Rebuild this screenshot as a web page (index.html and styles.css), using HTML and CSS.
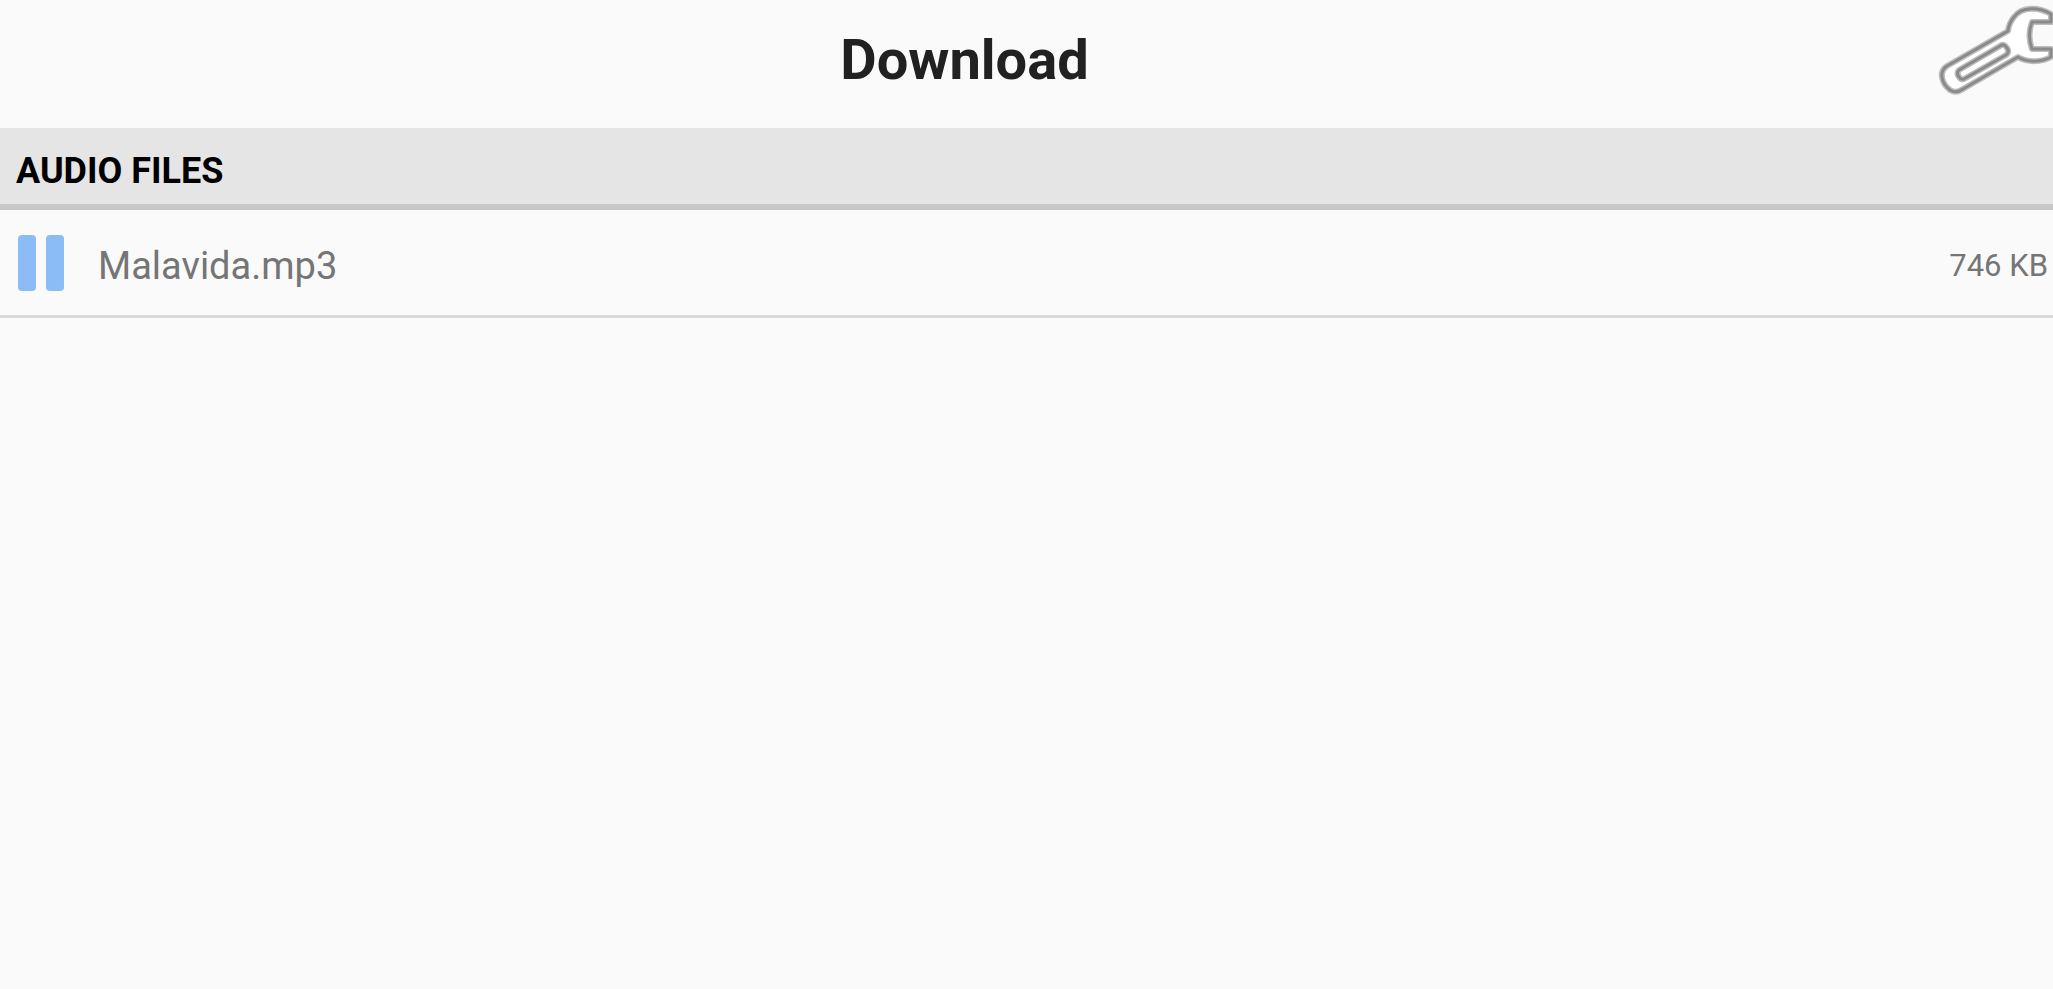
FILE: index.html
```html
<!DOCTYPE html>
<html lang="en">
  <head>
    <meta charset="UTF-8" />
    <meta name="viewport" content="width=device-width, initial-scale=1.0" />
    <title>Download</title>
    <link rel="stylesheet" href="styles.css">
  </head>
  <body>
    <header class="top-bar">
      <h1 class="title">Download</h1>
      <button class="settings" type="button" aria-label="Settings">
        <svg class="wrench" viewBox="6 0 124 128" aria-hidden="true">
          <g id="wrench-outline">
            <path d="M128 14 C116 7 99 6 91 17 Q86 23 85 31 L24 66 C15 72 19 84 27 90 Q33 94 40 89 L95 57 C105 63 119 62 128 57 V49 H109 Q104 35 109 22 H128 Z" />
            <path d="M36 70 L77 46 Q81 43 84 48 Q87 52 83 55 L41 79 Q38 80 36 77 Q33 73 36 70 Z" />
          </g>
          <use class="wrench-core" href="#wrench-outline" />
        </svg>
      </button>
    </header>
    <main>
      <h2 class="section-title">AUDIO FILES</h2>
      <ul class="file-list">
        <li class="file">
          <button class="pause" type="button" aria-label="Pause">
            <span class="pause-bar"></span>
            <span class="pause-bar"></span>
          </button>
          <span class="file-name">Malavida.mp3</span>
          <span class="file-size">746 KB</span>
        </li>
      </ul>
    </main>
  </body>
</html>
```
FILE: styles.css
```css
* {
  box-sizing: border-box;
}

body {
  margin: 0;
  background: #fafafa;
  color: #757575;
  font-family: Roboto, sans-serif;
}

button {
  padding: 0;
  border: 0;
  background: none;
  cursor: pointer;
}

.top-bar {
  display: flex;
  height: 128px;
}

.title {
  flex: 1;
  margin: 0;
  color: #212121;
  font-size: 56px;
  font-weight: 700;
  line-height: 120px;
  text-align: center;
}

.settings {
  width: 124px;
}

.wrench {
  display: block;
  width: 124px;
  height: 128px;
  fill: #fff;
  stroke: #bdbdbd;
  stroke-width: 6px;
  stroke-linejoin: round;
}

.wrench-core {
  fill: none;
  stroke: #8a8a8a;
  stroke-width: 3px;
}

.section-title {
  margin: 0;
  padding: 10px 16px 0;
  border-bottom: 6px solid #c8c8c8;
  background: #e5e5e5;
  color: #000;
  font-size: 36px;
  font-weight: 700;
  line-height: 66px;
}

.file-list {
  margin: 0;
  padding: 0;
  list-style: none;
}

.file {
  display: flex;
  align-items: center;
  height: 108px;
  padding: 0 5px 0 18px;
  border-bottom: 3px solid #d9d9d9;
}

.pause {
  display: flex;
  gap: 10px;
  margin-right: 34px;
}

.pause-bar {
  width: 18px;
  height: 56px;
  border-radius: 4px;
  background: #8bbcf6;
}

.file-name {
  flex: 1;
  padding-top: 6px;
  font-size: 38px;
}

.file-size {
  padding-top: 5px;
  font-size: 31px;
}
```
